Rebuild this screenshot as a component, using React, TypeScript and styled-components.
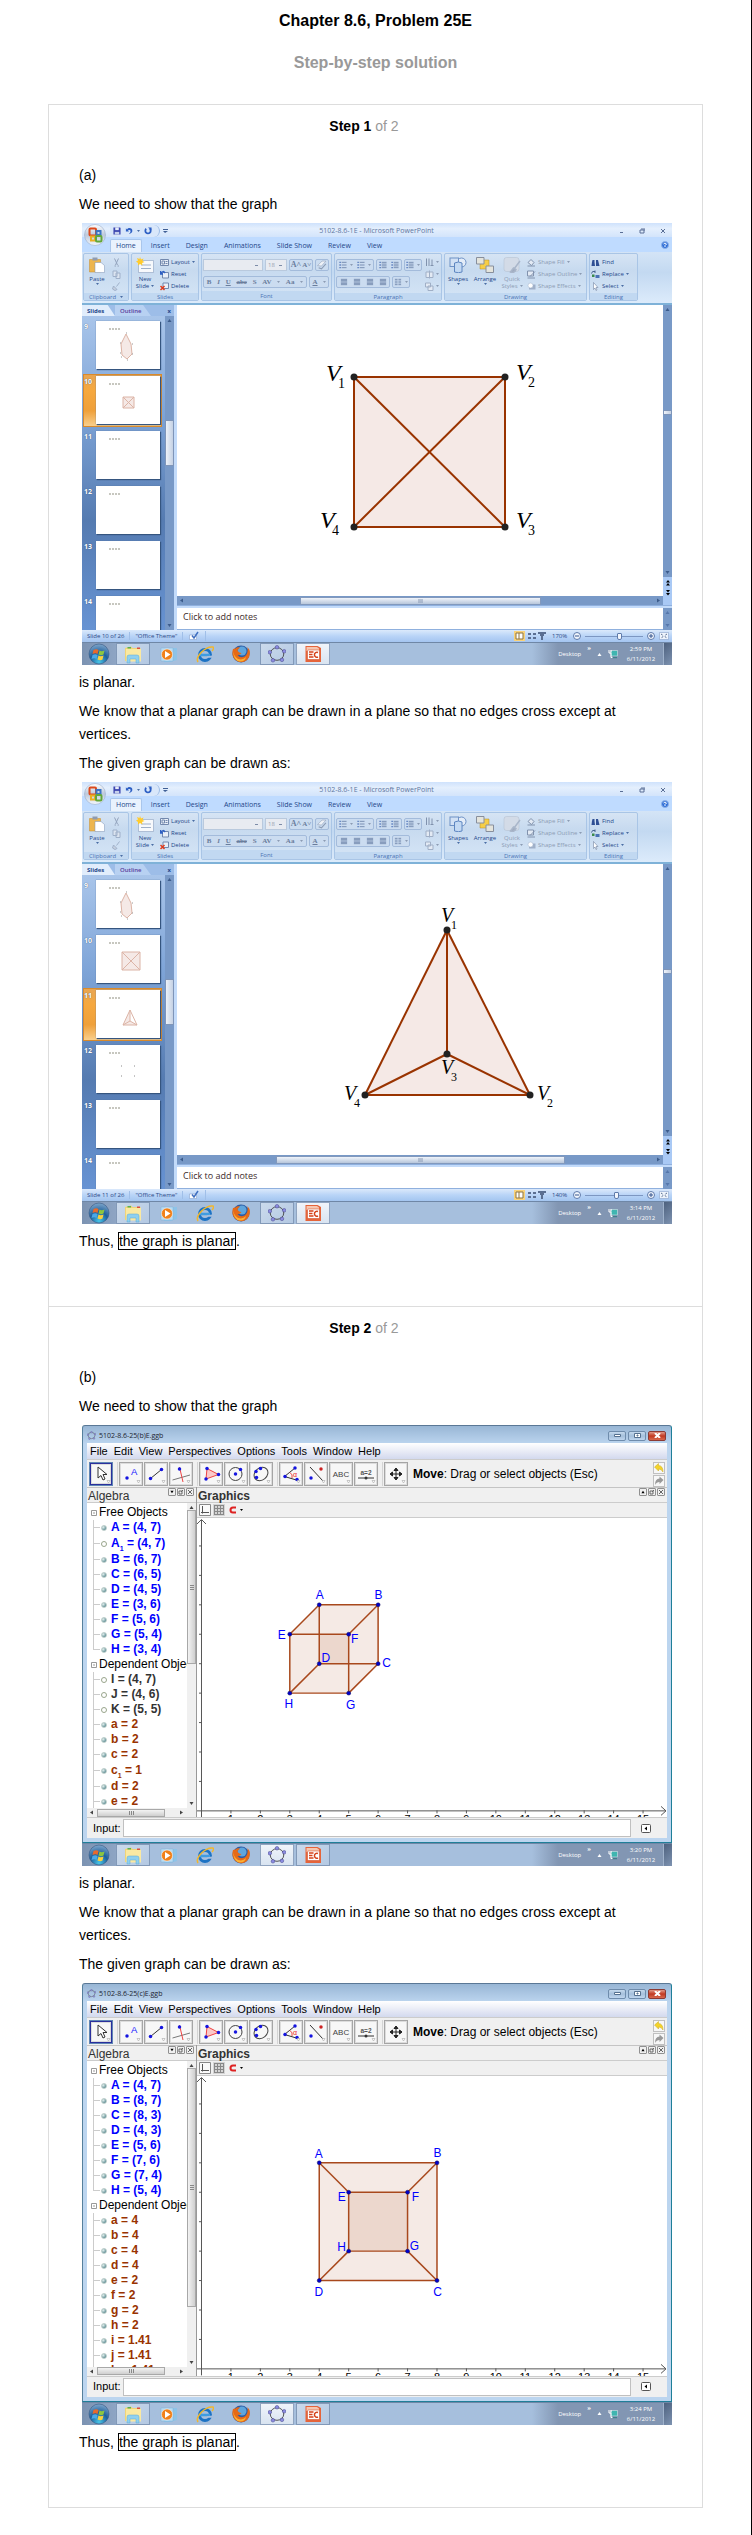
import React from "react";
import styled, { createGlobalStyle, css } from "styled-components";

const GlobalStyle = createGlobalStyle`
  * { box-sizing: border-box; }
  body {
    margin: 0;
    background: #fff;
    color: #000;
    font-family: "Liberation Sans", Arial, sans-serif;
    font-size: 14px;
  }
  h1, h2, h3, p, ul, ol, figure { margin: 0; padding: 0; }
  ul, ol { list-style: none; }
  button, input, select { font: inherit; color: inherit; margin: 0; padding: 0; border: 0; background: none; border-radius: 0; }
  svg { display: block; flex: none; }
`;

/* ---------- page ---------- */

const Page = styled.main`
  min-height: 100vh;
  padding: 12px 48px 26px;
  border-right: 1px solid #000;
`;
const Title = styled.h1`
  font-size: 16px;
  line-height: 18px;
  text-align: center;
`;
const Subtitle = styled.h2`
  margin: 24px 0 32px;
  font-size: 16px;
  line-height: 18px;
  text-align: center;
  color: #999;
`;
const Card = styled.div`
  border: 1px solid #ddd;
  border-top: 0;
`;
const Step = styled.section`
  border-top: 1px solid #ddd;
  padding: 12px 30px 53px;
`;
const StepHeading = styled.h3`
  margin-bottom: 29px;
  padding-right: 23px;
  font-size: 14px;
  line-height: 18px;
  text-align: center;
  span { font-weight: 400; color: #999; }
`;
const Prose = styled.div`
  display: flex;
  flex-direction: column;
  gap: 6px;
  line-height: 23px;
`;
const Text = styled.p`
  padding-right: 24px;
`;
const Answer = styled.span`
  border: 1px solid #000;
`;
const Shot = styled.figure`
  margin: 1px 0 0 3px;
  overflow: hidden;
`;

/* ---------- shared ---------- */

const Icon = styled.svg<{ $w: number; $h?: number }>`
  width: ${(p) => p.$w}px;
  height: ${(p) => p.$h ?? p.$w}px;
`;
const PlainButton = styled.button`
  display: flex;
  align-items: center;
  justify-content: center;
`;
const Caret = ({ color = "#4b6ea5" }: { color?: string }) => (
  <Icon $w={3} $h={2} viewBox="0 0 6 4"><path d="M0 0h6L3 4z" fill={color} /></Icon>
);
type Dir = "up" | "down" | "left" | "right";
const turn: Record<Dir, number> = { up: 0, right: 90, down: 180, left: 270 };
const Arrow = ({ dir, color = "#3c5c8c" }: { dir: Dir; color?: string }) => (
  <Icon $w={5} viewBox="0 0 10 10"><path d="M1 8h8L5 2z" fill={color} transform={`rotate(${turn[dir]} 5 5)`} /></Icon>
);

/* ---------- taskbar ---------- */

const Bar = styled.div`
  display: flex;
  height: 23px;
  background: #a6bfdd;
  border-top: 1px solid #6f87a6;
  font: 6px/10px "Open Sans", sans-serif;
  color: #fff;
`;
const StartArea = styled.div`
  display: flex;
  width: 34px;
  background: linear-gradient(90deg, #7c93b2, #8ea5c4);
`;
const TaskButton = styled(PlainButton)<{ $state?: "open" | "active" }>`
  width: 34px;
  margin-right: 2px;
  border: 1px solid transparent;
  ${(p) => p.$state === "open" && css`
    border-color: #8299b8;
    background: linear-gradient(135deg, #cbdaec, #b3c8e2);
  `}
  ${(p) => p.$state === "active" && css`
    border-color: #90a4c0;
    background: linear-gradient(180deg, #f0f4fa, #d9e4f1);
  `}
`;
const Tray = styled.div`
  display: flex;
  align-items: center;
  gap: 6px;
  margin-left: auto;
  padding: 0 5px 0 26px;
  background: linear-gradient(90deg, #a6bfdd, #8296b3 26px);
`;
const Chevrons = styled.span`align-self: flex-start; line-height: 11px; font-weight: 700;`;
const Clock = styled.time`width: 34px; text-align: center;`;
const ShowDesktop = styled.button`
  width: 9px;
  border-left: 1px solid #9fb2cb;
  background: linear-gradient(135deg, #4d617e, #7e93b1);
`;

const WindowsOrb = () => (
  <Icon $w={22} viewBox="0 0 44 44">
    <defs><radialGradient id="orb" cx=".5" cy=".9" r=".9"><stop offset="0" stopColor="#49c6e8" /><stop offset=".5" stopColor="#1d5f9b" /><stop offset="1" stopColor="#7fa6cb" /></radialGradient></defs>
    <circle cx="22" cy="22" r="20" fill="url(#orb)" stroke="#2b4d78" />
    <path d="M11 14c4-2 7-2 10 0l-2 8c-3-2-6-2-10 0z" fill="#e8692c" />
    <path d="M23 15c3 2 6 2 10 0l-2 8c-3 2-6 2-10 0z" fill="#8cc63f" />
    <path d="M9 24c4-2 7-2 10 0l-2 8c-3-2-6-2-10 0z" fill="#4aa8e8" />
    <path d="M21 25c3 2 6 2 10 0l-2 8c-3 2-6 2-10 0z" fill="#fbd13c" />
  </Icon>
);
const FolderIcon = () => (
  <Icon $w={20} viewBox="0 0 40 40">
    <path d="M4 8l12-3 3 3h16v26H4z" fill="#f0d477" /><path d="M6 10h30v25H6z" fill="#fae9a2" />
    <path d="M9 6h7v3H9z" fill="#58b158" /><path d="M28 7h6v3h-6z" fill="#d95040" />
    <path d="M8 38V26q0-4 4-4h16q4 0 4 4v12h-6v-8H14v8z" fill="#8fd0ef" stroke="#5aa9d4" />
  </Icon>
);
const PlayerIcon = () => (
  <Icon $w={18} viewBox="0 0 36 36">
    <path d="M12 6h22v24l-14 4H8z" fill="#8ec3e8" /><path d="M2 6h24v26H2z" fill="#b9dbf2" stroke="#7eb0d6" />
    <circle cx="14" cy="19" r="11" fill="#f08019" stroke="#fff" /><path d="M10 12l11 7-11 7z" fill="#fff" />
  </Icon>
);
const IeIcon = () => (
  <Icon $w={18} viewBox="0 0 36 36">
    <circle cx="18" cy="20" r="11" fill="none" stroke="#1d73c4" strokeWidth="6" />
    <path d="M8 20h20" stroke="#3f9ce0" strokeWidth="5" /><path d="M22 24h14v-2z" stroke="#a6bfdd" strokeWidth="3" />
    <path d="M4 34C-2 24 18 2 34 4c2 2 0 6-2 8" fill="none" stroke="#f2b72c" strokeWidth="3" />
  </Icon>
);
const FirefoxIcon = () => (
  <Icon $w={20} viewBox="0 0 40 40">
    <circle cx="20" cy="20" r="17" fill="#2c5ca5" /><circle cx="22" cy="14" r="9" fill="#5fa5dc" />
    <path d="M4 10q-4 14 5 22 12 9 23 0 8-8 5-20l-4-6q2 14-6 19-9 4-14-3 5 1 8-4-7-1-8-6l5-5q-6-2-9 2z" fill="#e66a17" />
    <path d="M4 10q0 14 10 20 10 3 16-4-2 9-12 9Q4 34 4 10z" fill="#fbb034" />
  </Icon>
);
const PentagonIcon = ({ size, node = "#8b8be0" }: { size: number; node?: string }) => {
  const pts = [[20, 5], [36, 14], [31, 33], [11, 34], [4, 16]];
  return (
    <Icon $w={size} viewBox="0 0 40 40">
      <ellipse cx="20" cy="20" rx="15" ry="14" fill="none" stroke="#444" strokeWidth="2" />
      {pts.map(([x, y]) => <circle key={x} cx={x} cy={y} r="4" fill={node} stroke="#3a3a80" />)}
    </Icon>
  );
};
const PptIcon = () => (
  <Icon $w={18} viewBox="0 0 36 36">
    <path d="M3 2h24l7 4v28H3z" fill="#e5643a" /><path d="M5 4h21l4 3v5H5z" fill="#f7c6b0" />
    <rect x="7" y="10" width="24" height="19" rx="2" fill="#fff" stroke="#c9401b" />
    <path d="M10 14h9M10 19h7M10 24h9" stroke="#d5421a" strokeWidth="3" />
    <path d="M28 15a5 5 0 1 0 0 9" fill="none" stroke="#d5421a" strokeWidth="3" />
  </Icon>
);
const NetIcon = () => (
  <Icon $w={10} viewBox="0 0 20 20">
    <rect x="6" y="3" width="13" height="11" fill="#3fb5b0" stroke="#e8f0f4" /><path d="M2 2v6M6 2v5M2 8h4v9h5" fill="none" stroke="#fff" strokeWidth="2" />
    <path d="M9 17h9" stroke="#3f7f8c" strokeWidth="3" />
  </Icon>
);

const Taskbar = ({ active, time }: { active: "ppt" | "ggb"; time: string }) => (
  <Bar>
    <StartArea><PlainButton aria-label="Start"><svg width="6" height="1" /><WindowsOrb /></PlainButton></StartArea>
    <TaskButton $state="open" aria-label="Explorer"><FolderIcon /></TaskButton>
    <TaskButton aria-label="Media Player"><PlayerIcon /></TaskButton>
    <TaskButton aria-label="Internet Explorer"><IeIcon /></TaskButton>
    <TaskButton aria-label="Firefox"><FirefoxIcon /></TaskButton>
    <TaskButton $state={active === "ggb" ? "active" : "open"} aria-label="GeoGebra"><PentagonIcon size={18} /></TaskButton>
    <TaskButton $state={active === "ppt" ? "active" : "open"} aria-label="PowerPoint"><PptIcon /></TaskButton>
    <Tray>
      <span>Desktop</span><Chevrons>»</Chevrons><Arrow dir="up" color="#fff" /><NetIcon />
      <Clock>{time}<br />6/11/2012</Clock>
    </Tray>
    <ShowDesktop aria-label="Show desktop" />
  </Bar>
);

/* ---------- PowerPoint window ---------- */

const Ppt = styled.div`
  position: relative;
  font: 6px/8px "Open Sans", sans-serif;
  color: #24478a;
`;
const OfficeButton = styled.button`
  position: absolute;
  left: 2px;
  top: 1px;
`;
const PptTitle = styled.div`
  display: flex;
  align-items: center;
  height: 14px;
  padding: 2px 6px 0 28px;
  background: linear-gradient(180deg, #cfe2fc, #e4effd 40%, #d3e4fb);
  color: #6076a0;
  font-size: 7px;
`;
const QuickAccess = styled.div`
  display: flex;
  align-items: center;
  gap: 4px;
  width: 50px;
  height: 12px;
  padding-left: 3px;
  border-right: 1px solid #9dbce6;
  border-radius: 0 6px 6px 0;
  background: #d9e7fa;
`;
const PptName = styled.span`flex: 1; text-align: center; padding-right: 34px;`;
const WindowButtons = styled.div`display: flex; align-items: center; gap: 15px;`;
const Tabs = styled.div`
  display: flex;
  align-items: flex-end;
  height: 15px;
  padding: 0 3px 0 28px;
  background: #bfdbff;
  font-size: 7px;
`;
const Tab = styled(PlainButton)<{ $on?: boolean }>`
  height: 13px;
  padding: 0 ${(p) => (p.$on ? 5 : 8)}px;
  border-radius: 2px 2px 0 0;
  ${(p) => p.$on && css`background: #e9f2fd; border: 1px solid #a9c6ec; border-bottom: 0; margin-right: 1px;`}
`;
const Help = styled(PlainButton)`margin: 0 0 3px auto;`;
const Ribbon = styled.div`
  display: flex;
  gap: 2px;
  height: 53px;
  padding: 1px 1px 2px;
  border-bottom: 2px solid #7fb2d8;
  background: linear-gradient(180deg, #d4e4f6, #c3d9f1 40%, #dcebfb);
`;
const Group = styled.section<{ $w: number }>`
  display: flex;
  flex-direction: column;
  width: ${(p) => p.$w}px;
  border: 1px solid #a9c5e6;
  border-radius: 2px;
  background: linear-gradient(180deg, #d6e4f4, #c7daef 35%, #d5e5f6);
  overflow: hidden;
`;
const GroupBody = styled.div`
  display: flex;
  flex: 1;
  gap: 3px;
  padding: 2px 1px 0;
`;
const GroupLabel = styled.div`
  display: flex;
  justify-content: center;
  align-items: center;
  gap: 4px;
  height: 9px;
  background: #c1d8f1;
  color: #4b74b5;
`;
const BigButton = styled.button<{ $dim?: boolean }>`
  display: flex;
  flex-direction: column;
  align-items: center;
  width: 24px;
  line-height: 7px;
  color: ${(p) => (p.$dim ? "#8c9cb4" : "inherit")};
  svg:first-child { margin: 1px 0 3px; }
`;
const Inline = styled.span`display: flex; align-items: center; gap: 2px;`;
const SmallStack = styled.div`
  display: flex;
  flex-direction: column;
  justify-content: space-around;
  align-items: flex-start;
  padding-bottom: 1px;
`;
const SmallButton = styled.button<{ $dim?: boolean }>`
  display: flex;
  align-items: center;
  gap: 2px;
  height: 12px;
  white-space: nowrap;
  color: ${(p) => (p.$dim ? "#8c9cb4" : "inherit")};
`;
const ToolRows = styled.div`
  display: flex;
  flex-direction: column;
  gap: 5px;
  padding-top: 3px;
`;
const ToolRow = styled.div`display: flex; gap: 2px;`;
const ToolSet = styled.div<{ $w: number }>`
  display: flex;
  align-items: center;
  justify-content: space-around;
  width: ${(p) => p.$w}px;
  height: 12px;
  border: 1px solid #a3bbdb;
  border-radius: 2px;
  background: #cbdcf0;
  color: #6a7d9c;
`;
const FontSelect = styled.select<{ $w: number }>`
  appearance: none;
  width: ${(p) => p.$w}px;
  height: 12px;
  padding-left: 2px;
  border: 1px solid #b9c9dd;
  background: #e8ebf1 linear-gradient(45deg, #7d8ca8, #7d8ca8) no-repeat right 4px center / 3px 1px;
  color: #9aa3b2;
`;
const Glyph = styled.button<{ $size?: number }>`
  font: ${(p) => p.$size ?? 7}px/10px "Liberation Serif", serif;
  font-weight: 700;
  &:nth-child(2) { font-style: ${(p) => (p.$size ? "normal" : "italic")}; }
`;

const small = (d: React.ReactNode, w = 9) => <Icon $w={w} viewBox="0 0 18 18">{d}</Icon>;
const OfficeLogo = () => (
  <Icon $w={22} viewBox="0 0 44 44">
    <defs><linearGradient id="ob" x2="0" y2="1"><stop stopColor="#fff" /><stop offset=".5" stopColor="#bcc9dc" /><stop offset="1" stopColor="#f4f8fd" /></linearGradient></defs>
    <circle cx="22" cy="22" r="21" fill="url(#ob)" stroke="#8ea3c2" />
    <g fill="none" strokeWidth="4"><rect x="11" y="9" width="13" height="14" rx="2" stroke="#dd4a1c" /><rect x="25" y="14" width="8" height="8" stroke="#3a74c4" /><rect x="14" y="25" width="8" height="8" stroke="#e9b022" /><rect x="24" y="24" width="11" height="11" rx="2" stroke="#62a73b" /></g>
  </Icon>
);
const Save = () => small(<><path d="M1 1h15l1 1v15H1z" fill="#3d47b0" /><path d="M5 1h8v6H5z" fill="#e7ecfa" /><path d="M4 11h10v6H4z" fill="#c6d0ec" /></>, 8);
const Undo = () => small(<path d="M2 3v7h7L6.500 7.500q6-2 6 2t-4 6q8-1 8-7t-7-6q-3 0-5 3z" fill="#2d5fc4" />, 8);
const Redo = () => small(<><path d="M5 4a6 6 0 1 0 8 0" fill="none" stroke="#2d5fc4" strokeWidth="4" /><path d="M9 1h8v7z" fill="#2d5fc4" /></>, 8);
const Lines = ({ n = 4, list = false }) => small(
  <>{Array.from({ length: n }, (_, i) => <path key={i} d={`M${list ? 6 : 2} ${3 + (i * 12) / (n - 1)}h${list ? 11 : 14}`} stroke="#7187ab" strokeWidth="2" />)}
    {list && [3, 9, 15].map((y) => <path key={y} d={`M1 ${y}h3`} stroke="#4f74b8" strokeWidth="3" />)}</>, 8);

const PptRibbon = () => (
  <Ribbon>
    <Group $w={46}>
      <GroupBody>
        <BigButton>
          <Icon $w={16} viewBox="0 0 32 32"><path d="M1 5h22v25H1z" fill="#edb54d" stroke="#c58d2e" /><path d="M7 1h10v6H7z" fill="#8f9bb0" /><path d="M12 11h12l7 6v14H12z" fill="#fff" stroke="#7d92b5" /></Icon>
          Paste<Caret />
        </BigButton>
        <SmallStack>
          <SmallButton aria-label="Cut">{small(<path d="M5 1l6 13M13 1L7 14M5 16h3M11 16h3" stroke="#93a3bd" strokeWidth="2" />)}</SmallButton>
          <SmallButton aria-label="Copy">{small(<path d="M2 2h8v11H2zM8 6h8v11H8z" fill="#dbe4f0" stroke="#9fb0c9" strokeWidth="2" />)}</SmallButton>
          <SmallButton aria-label="Format painter">{small(<path d="M15 1L9 9M3 8l7 7-4 2-5-3z" fill="#c6d0df" stroke="#9fb0c9" strokeWidth="2" />)}</SmallButton>
        </SmallStack>
      </GroupBody>
      <GroupLabel>Clipboard <Caret /></GroupLabel>
    </Group>
    <Group $w={68}>
      <GroupBody>
        <BigButton>
          <Icon $w={18} $h={16} viewBox="0 0 36 32"><path d="M5 7h30v24H5z" fill="#f7f9fc" stroke="#7d92b5" /><path d="M10 16h20M10 23h20" stroke="#9fb0c9" strokeWidth="2" /><path d="M8 0l2 5 5-2-2 5 4 2-5 2 1 5-5-3-4 3V12L0 9l4-2-2-5 5 2z" fill="#ffcb2e" /></Icon>
          New<Inline>Slide<Caret /></Inline>
        </BigButton>
        <SmallStack>
          <SmallButton>{small(<path d="M1 3h16v12H1zM4 6h5v6H4zM11 7h4M11 11h4" fill="#e9eff8" stroke="#7288ad" strokeWidth="2" />)}Layout <Caret /></SmallButton>
          <SmallButton>{small(<><path d="M5 5h12v11H5z" fill="#e9eff8" stroke="#7288ad" strokeWidth="2" /><path d="M1 2v6h5M2 7q4-7 8-1" fill="none" stroke="#2d5fc4" strokeWidth="3" /></>)}Reset</SmallButton>
          <SmallButton>{small(<><path d="M6 2h11v11H6z" fill="#e9eff8" stroke="#7288ad" strokeWidth="2" /><path d="M1 8l8 8M9 8l-8 8" stroke="#e03a1a" strokeWidth="3" /></>)}Delete</SmallButton>
        </SmallStack>
      </GroupBody>
      <GroupLabel>Slides</GroupLabel>
    </Group>
    <Group $w={131}>
      <GroupBody>
        <ToolRows>
          <ToolRow>
            <Inline><FontSelect $w={60} aria-label="Font"><option></option></FontSelect></Inline>
            <FontSelect $w={22} aria-label="Font size" defaultValue="18"><option>18</option></FontSelect>
            <ToolSet $w={24}><Glyph $size={8}>A˄</Glyph><Glyph $size={7}>A˅</Glyph></ToolSet>
            <ToolSet $w={14}>{small(<><path d="M1 10l8-8h7l-8 9z" fill="#eef2f8" stroke="#8c9cb4" /><path d="M3 14l5 2 8-9" fill="none" stroke="#8c9cb4" strokeWidth="2" /></>, 10)}</ToolSet>
          </ToolRow>
          <ToolRow>
            <ToolSet $w={104}>
              <Glyph>B</Glyph><Glyph>I</Glyph><Glyph><u>U</u></Glyph><Glyph><s>abc</s></Glyph><Glyph>S</Glyph><Glyph>AV</Glyph><Caret color="#8c9cb4" /><Glyph>Aa</Glyph><Caret color="#8c9cb4" />
            </ToolSet>
            <ToolSet $w={20}><Glyph><u>A</u></Glyph><Caret color="#8c9cb4" /></ToolSet>
          </ToolRow>
        </ToolRows>
      </GroupBody>
      <GroupLabel>Font</GroupLabel>
    </Group>
    <Group $w={108}>
      <GroupBody>
        <ToolRows>
          <ToolRow>
            <ToolSet $w={38}><Lines n={3} list /><Caret color="#8c9cb4" /><Lines n={3} list /><Caret color="#8c9cb4" /></ToolSet>
            <ToolSet $w={26}><Lines list /><Lines list /></ToolSet>
            <ToolSet $w={18}><Lines list /><Caret color="#8c9cb4" /></ToolSet>
          </ToolRow>
          <ToolRow>
            <ToolSet $w={54}><Lines n={5} /><Lines n={5} /><Lines n={5} /><Lines n={5} /></ToolSet>
            <ToolSet $w={18}>{small(<path d="M2 3h6M2 7h6M2 11h6M2 15h6M10 3h6M10 7h6M10 11h6M10 15h6" stroke="#7187ab" strokeWidth="2" />, 8)}<Caret color="#8c9cb4" /></ToolSet>
          </ToolRow>
        </ToolRows>
        <SmallStack>
          <SmallButton $dim aria-label="Text direction">{small(<path d="M3 1v15M8 1v15M14 3v13M11 15h6" stroke="#8192ad" strokeWidth="2" />)}<Caret color="#8c9cb4" /></SmallButton>
          <SmallButton $dim aria-label="Align text">{small(<path d="M2 4h14v11H2zM9 1v16" fill="#e3eaf4" stroke="#a0afc6" strokeWidth="2" />)}<Caret color="#8c9cb4" /></SmallButton>
          <SmallButton $dim aria-label="SmartArt">{small(<path d="M1 2h10v8H1zM6 8h10v9H6z" fill="#e3eaf4" stroke="#a0afc6" strokeWidth="2" />)}<Caret color="#8c9cb4" /></SmallButton>
        </SmallStack>
      </GroupBody>
      <GroupLabel>Paragraph</GroupLabel>
    </Group>
    <Group $w={143}>
      <GroupBody>
        <BigButton>
          <Icon $w={18} $h={16} viewBox="0 0 36 32"><circle cx="25" cy="11" r="9" fill="#e3ecf8" stroke="#6d91c6" strokeWidth="2" /><rect x="2" y="2" width="17" height="17" fill="#d2e1f5" stroke="#6d91c6" strokeWidth="2" /><path d="M11 12q8-4 15 0v18q-7 3-15 0z" fill="#c3d9f3" stroke="#5e86c0" strokeWidth="2" /></Icon>
          Shapes<Caret />
        </BigButton>
        <BigButton>
          <Icon $w={18} $h={16} viewBox="0 0 36 32"><path d="M8 6h18v18H8z" fill="#f6ce46" stroke="#b08a2a" /><path d="M1 1h15v13H1zM20 18h15v13H20z" fill="#e4e4dc" stroke="#888f9c" strokeWidth="2" /></Icon>
          Arrange<Caret />
        </BigButton>
        <BigButton $dim>
          <Icon $w={18} $h={16} viewBox="0 0 36 32"><rect x="2" y="1" width="30" height="28" rx="5" fill="#d3dbe7" stroke="#b0bccd" /><path d="M34 8L22 24M15 30q8 3 11-5l-5-3z" fill="#9fabbf" stroke="#a9b6ca" strokeWidth="3" /></Icon>
          Quick<Inline>Styles<Caret color="#8c9cb4" /></Inline>
        </BigButton>
        <SmallStack>
          <SmallButton $dim>{small(<path d="M2 9l6-6 6 6-5 6zM1 16h15" fill="#e3eaf4" stroke="#8192ad" strokeWidth="2" />)}Shape Fill <Caret color="#8c9cb4" /></SmallButton>
          <SmallButton $dim>{small(<path d="M1 2h12v10H1zM16 3L6 13M1 16h15" fill="#e3eaf4" stroke="#8192ad" strokeWidth="2" />)}Shape Outline <Caret color="#8c9cb4" /></SmallButton>
          <SmallButton $dim>{small(<><path d="M4 5h13v10H4z" fill="#9fb0c9" /><circle cx="7" cy="7" r="5" fill="#fff" stroke="#9fb0c9" /></>)}Shape Effects <Caret color="#8c9cb4" /></SmallButton>
        </SmallStack>
      </GroupBody>
      <GroupLabel>Drawing</GroupLabel>
    </Group>
    <Group $w={49}>
      <GroupBody>
        <SmallStack>
          <SmallButton>{small(<path d="M3 4h4v4l1 8H1l1-8zM10 4h4l1 4 2 8h-7z" fill="#2f4f94" />)}Find</SmallButton>
          <SmallButton>{small(<><path d="M1 7q1-6 7-4M8 1v5" fill="none" stroke="#46618f" strokeWidth="2" /><path d="M2 9h5v5H2z" fill="#3b8a4c" /><path d="M9 10h8v6H9z" fill="#4a72b5" /></>)}Replace <Caret /></SmallButton>
          <SmallButton>{small(<path d="M5 1v14l3-3 2 5 2-1-2-5h4z" fill="#fff" stroke="#5f7091" />)}Select <Caret /></SmallButton>
        </SmallStack>
      </GroupBody>
      <GroupLabel>Editing</GroupLabel>
    </Group>
  </Ribbon>
);

const PptBody = styled.div`display: flex; background: #c3dbfa;`;
const SidePane = styled.div`
  display: flex;
  flex-direction: column;
  width: 92px;
  margin-right: 3px;
`;
const SideTabs = styled.div`
  display: flex;
  align-items: center;
  height: 11px;
  padding-right: 3px;
  background: #9dbde8;
`;
const SideTab = styled.button<{ $on?: boolean }>`
  height: 11px;
  width: ${(p) => (p.$on ? 33 : 36)}px;
  clip-path: polygon(0 0, 78% 0, 100% 100%, 0 100%);
  background: ${(p) => (p.$on ? "#e1edfc" : "#b8d1f2")};
  font-weight: ${(p) => (p.$on ? 700 : 600)};
  color: ${(p) => (p.$on ? "#24478a" : "#5a3a9a")};
  text-align: left;
  padding-left: 5px;
`;
const SideClose = styled.button`margin-left: auto; font-weight: 700;`;
const SideScroll = styled.div`
  display: flex;
  flex: 1;
  contain: size;
  overflow: hidden;
`;
const SlideList = styled.ol`
  display: flex;
  flex-direction: column;
  gap: 2px;
  flex: 1;
  padding: 3px 3px 0 2px;
  background: linear-gradient(180deg, #a9c5ea 0, #7fa5d8 30%, #557bb1 65%, #6793d3);
`;
const SlideItem = styled.li<{ $on?: boolean }>`
  display: flex;
  flex: none;
  height: 53px;
  padding-top: 2px;
  color: #fff;
  font-size: 7px;
  font-weight: 700;
  ${(p) => p.$on && css`
    background: linear-gradient(180deg, #e8a552, #f6a83e 30%, #efa03a 70%, #f9cf8c);
    border: 1px solid #d98a2b;
    padding-top: 1px;
    margin-left: -1px;
  `}
`;
const SlideNo = styled.span`width: 12px; padding-top: 2px; text-shadow: 0 0 1px #2a4068;`;
const Thumb = styled.button`
  width: 64px;
  height: 48px;
  background: #fff;
  box-shadow: 1px 1px 1px #35557f, 0 0 1px #56749c;
`;
const VScroll = styled.div<{ $w: number }>`
  display: flex;
  flex-direction: column;
  align-items: center;
  width: ${(p) => p.$w}px;
  background: #7899c7;
  padding: 2px 0;
`;
const ScrollThumb = styled.div<{ $h: number; $top: number }>`
  width: 100%;
  height: ${(p) => p.$h}px;
  margin: ${(p) => p.$top}px 0 auto;
  border: 1px solid #7f95b8;
  border-radius: 1px;
  background: linear-gradient(90deg, #edf2f9, #c4d1e4);
`;
const Editor = styled.div`flex: 1; min-width: 0;`;
const EditorRow = styled.div`display: flex;`;
const SlideCanvas = styled.svg`
  flex: 1;
  min-width: 0;
  width: 100%;
  background: #fff;
  font-family: "Liberation Serif", "Times New Roman", serif;
`;
const HScroll = styled.div`
  display: flex;
  align-items: center;
  flex: 1;
  height: 9px;
  padding: 0 2px;
  background: #7899c7;
`;
const HThumb = styled.div<{ $left: number; $w: number }>`
  display: flex;
  align-items: center;
  justify-content: center;
  width: ${(p) => p.$w}%;
  height: 8px;
  margin: 0 auto 0 ${(p) => p.$left}%;
  border: 1px solid #8299bd;
  background: linear-gradient(180deg, #f0f4fa, #b7c6db);
`;
const Splitter = styled.div`height: 3px; background: #c3dbfa; border-top: 1px solid #8fb0de;`;
const Notes = styled.p`
  flex: 1;
  height: 22px;
  padding: 0 6px;
  background: #fff;
  border-bottom: 1px solid #8fb0de;
  font-size: 9px;
  line-height: 18px;
  color: #3c2a2a;
`;
const PageJump = styled.div`width: 9px; background: #a9c9f5;`;
const RightRail = styled.div`display: flex; flex-direction: column; width: 9px;`;
const RailGap = styled.div`
  display: flex;
  flex-direction: column;
  align-items: center;
  gap: 4px;
  height: 19px;
  padding-top: 3px;
  background: #a9c9f5;
`;
const RailScroll = styled(VScroll)`flex: 1;`;
const Status = styled.div`
  display: flex;
  align-items: center;
  height: 12px;
  padding: 0 3px 0 5px;
  background: linear-gradient(180deg, #dbe9fb, #b9d4f7 50%, #a4c5f0);
  color: #2d4a86;
`;
const StatusCell = styled.span`
  padding-right: 5px;
  margin-right: 5px;
  border-right: 1px solid #a0bfe8;
  white-space: nowrap;
`;
const ZoomArea = styled.div`
  display: flex;
  align-items: center;
  gap: 4px;
  margin-left: auto;
`;
const ZoomLabel = styled.label`width: 17px; margin-left: 2px;`;
const Slider = styled.input`
  appearance: none;
  width: 58px;
  height: 8px;
  background: linear-gradient(#7d97c2, #7d97c2) no-repeat center / 100% 1px;
  &::-webkit-slider-thumb {
    appearance: none;
    width: 5px;
    height: 7px;
    border: 1px solid #5f7bab;
    border-radius: 1px 1px 2px 2px;
    background: #f2f6fc;
  }
`;
const Sign = ({ plus }: { plus?: boolean }) => (
  <Icon $w={8} viewBox="0 0 16 16"><circle cx="8" cy="8" r="7" fill="#f2f6fc" stroke="#5f7bab" strokeWidth="2" /><path d={plus ? "M4 8h8M8 4v8" : "M4 8h8"} stroke="#35558f" strokeWidth="2" /></Icon>
);

type ThumbArt = "blob" | "smallSquare" | "square" | "triangle" | "dots" | "none";
const art: Record<ThumbArt, React.ReactNode> = {
  none: null,
  blob: <><path d="M30 13l5 10 1 10-5 5-5-4-1-11z" /><path d="M30 12h1M36 23h1M36 33h1M31 39h1M25 36h1M24 32h1M24 22h1" stroke="#999" /></>,
  smallSquare: <path d="M27 21h11v11H27zl11 11M38 21L27 32" />,
  square: <path d="M26 17h18v18H26zl18 18M44 17L26 35" />,
  triangle: <path d="M34 20l7 15H27zv11l7 4M34 31l-7 4" />,
  dots: <path d="M25 21h1M38 21h1M25 31h1M38 31h1" stroke="#888" />,
};

type Pt = [number, number];
interface VLabel { n: number; x: number; y: number }
interface PptProps {
  slide: string; zoom: string; time: string; thumbs: ThumbArt[]; selected: number; hLeft: number; hWidth: number;
  outline: Pt[]; edges: [Pt, Pt][]; nodes: Pt[]; labels: VLabel[]; size: number;
}
const Powerpoint = (p: PptProps) => (
  <Shot>
    <Ppt>
      <PptTitle>
        <QuickAccess><Save /><Undo /><Caret /><Redo /></QuickAccess>
        <svg width="8" height="4" viewBox="0 0 8 4"><path d="M3 0h5v1H3zM3 2h5L5 4z" fill="#3f5f96" /></svg>
        <PptName>5102-8.6-1E - Microsoft PowerPoint</PptName>
        <WindowButtons>
          <button aria-label="Minimize"><svg width="5" height="6"><path d="M1 4h3v1H1z" fill="#5a6f96" /></svg></button>
          <button aria-label="Restore"><svg width="6" height="6"><path d="M1 2h4v3H1zM2 1h4v2" fill="none" stroke="#5a6f96" /></svg></button>
          <button aria-label="Close"><svg width="6" height="6"><path d="M1 1l4 4M5 1L1 5" stroke="#5a6f96" /></svg></button>
        </WindowButtons>
      </PptTitle>
      <Tabs>
        <Tab $on>Home</Tab><Tab>Insert</Tab><Tab>Design</Tab><Tab>Animations</Tab><Tab>Slide Show</Tab><Tab>Review</Tab><Tab>View</Tab>
        <Help aria-label="Help"><Icon $w={8} viewBox="0 0 16 16"><circle cx="8" cy="8" r="7" fill="#2f6fd8" stroke="#8fb2e8" strokeWidth="2" /><path d="M5 6q3-4 6 0l-3 3v3" fill="none" stroke="#fff" strokeWidth="2" /></Icon></Help>
      </Tabs>
      <PptRibbon />
      <OfficeButton aria-label="Office"><OfficeLogo /></OfficeButton>
      <PptBody>
        <SidePane>
          <SideTabs><SideTab $on>Slides</SideTab><SideTab>Outline</SideTab><SideClose aria-label="Close pane">x</SideClose></SideTabs>
          <SideScroll>
            <SlideList>
              {p.thumbs.map((t, i) => (
                <SlideItem key={i} $on={i === p.selected}>
                  <SlideNo>{i + 9}</SlideNo>
                  <Thumb aria-label={`Slide ${i + 9}`}>
                    <Icon $w={64} $h={48} viewBox="0 0 64 48">
                      <path d="M13 8h11" stroke="#8f8f80" strokeDasharray="2 1" />
                      <g fill={t === "dots" ? "none" : "#f5e9e6"} stroke="#dcb4a6">{art[t]}</g>
                    </Icon>
                  </Thumb>
                </SlideItem>
              ))}
            </SlideList>
            <VScroll $w={9}><Arrow dir="up" /><ScrollThumb $h={46} $top={97} /><Arrow dir="down" /></VScroll>
          </SideScroll>
        </SidePane>
        <Editor>
          <EditorRow>
            <SlideCanvas viewBox="95 82 486 291">
              <polygon points={p.outline.join(" ")} fill="#f5e9e6" />
              <g stroke="#993300" strokeWidth="2">{p.edges.map(([a, b], i) => <line key={i} x1={a[0]} y1={a[1]} x2={b[0]} y2={b[1]} />)}</g>
              {p.nodes.map(([x, y]) => <circle key={`${x},${y}`} cx={x} cy={y} r="3.500" fill="#222" />)}
              {p.labels.map((l) => (
                <g key={l.n}>
                  <text x={l.x} y={l.y} fontSize={p.size} fontStyle="italic">V</text>
                  <text x={l.x + p.size / 2} y={l.y + 7} fontSize={p.size === 24 ? 14 : 12}>{l.n}</text>
                </g>
              ))}
            </SlideCanvas>
            <RightRail>
              <RailScroll $w={9}><Arrow dir="up" /><ScrollThumb $h={5} $top={98} /><Arrow dir="down" /></RailScroll>
              <RailGap>
                <svg width="4" height="6" viewBox="0 0 8 12"><path d="M0 5l4-5 4 5zM0 11l4-5 4 5z" fill="#000" /></svg>
                <svg width="4" height="6" viewBox="0 0 8 12"><path d="M0 0l4 5 4-5zM0 6l4 5 4-5z" fill="#000" /></svg>
              </RailGap>
            </RightRail>
          </EditorRow>
          <EditorRow>
            <HScroll><Arrow dir="left" /><HThumb $left={p.hLeft} $w={p.hWidth}><svg width="5" height="4"><path d="M0 1h5M0 3h5" stroke="#8a9ab5" /></svg></HThumb><Arrow dir="right" /></HScroll>
            <PageJump />
          </EditorRow>
          <Splitter />
          <EditorRow>
            <Notes>Click to add notes</Notes>
            <VScroll $w={9}><Arrow dir="up" color="#5677ab" /><svg width="1" height="8" /><Arrow dir="down" color="#5677ab" /></VScroll>
          </EditorRow>
        </Editor>
      </PptBody>
      <Status>
        <StatusCell>Slide {p.slide} of 26</StatusCell>
        <StatusCell>"Office Theme"</StatusCell>
        <StatusCell><svg width="12" height="10" viewBox="0 0 24 20"><path d="M3 8h14v9H3z" fill="#fff" stroke="#7d97c2" /><path d="M8 9l4 5 8-12" fill="none" stroke="#3f6fc0" strokeWidth="3" /></svg></StatusCell>
        <ZoomArea>
          <svg width="32" height="10">
            <path d="M0 0h11v10H0z" fill="#f9d27a" /><path d="M2 2h7v6H2zM5 2v6" fill="#fff" stroke="#8d7440" />
            <path d="M14 2h3v2h-3zM19 2h3v2h-3zM14 6h3v2h-3zM19 6h3v2h-3z" fill="#5b6f92" /><path d="M24 2h8M26 4h4M28 5v4" stroke="#5b6f92" strokeWidth="2" />
          </svg>
          <ZoomLabel htmlFor={`zoom-${p.slide}`}>{p.zoom}</ZoomLabel>
          <Sign />
          <Slider id={`zoom-${p.slide}`} type="range" min={0} max={100} defaultValue={p.zoom === "170%" ? 60 : 55} />
          <Sign plus />
          <svg width="10" height="8" viewBox="0 0 20 16"><path d="M1 1h18v14H1z" fill="#eef4fc" stroke="#7d97c2" /><path d="M4 4l12 8M16 4L4 12" stroke="#5b6f92" strokeWidth="2" strokeDasharray="4 5" /></svg>
        </ZoomArea>
      </Status>
      <Taskbar active="ppt" time={p.time} />
    </Ppt>
  </Shot>
);

/* ---------- GeoGebra window ---------- */

const Frame = styled.div`
  padding: 0 4px 4px;
  border: 1px solid #1f7f99;
  border-left-color: #56809c;
  border-top-color: #5a7896;
  border-radius: 3px 3px 0 0;
  background: linear-gradient(180deg, #98b6d5 0, #bcd5ef 18px);
`;
const GgbTitle = styled.div`
  display: flex;
  align-items: center;
  height: 17px;
  padding-top: 2px;
  font: 7px/8px "Open Sans", sans-serif;
  color: #1c2430;
`;
const GgbName = styled.span`flex: 1; padding-left: 3px;`;
const FrameButton = styled(PlainButton)<{ $close?: boolean }>`
  width: 18px;
  height: 10px;
  margin: 0 1px;
  border: 1px solid ${(p) => (p.$close ? "#8c3a34" : "#6f8cac")};
  border-radius: 2px;
  background: ${(p) => (p.$close ? "linear-gradient(180deg,#e09a8a,#c23a22 50%,#d8694e)" : "linear-gradient(180deg,#c4d8ec,#a5c0dc 50%,#bfd6ee)")};
`;
const Menu = styled.nav`
  display: flex;
  align-items: center;
  gap: 6px;
  height: 16px;
  padding-left: 3px;
  background: linear-gradient(180deg, #fff, #eef0f8 40%, #d3d9ee);
  font-size: 11px;
`;
const Tools = styled.div`
  display: flex;
  align-items: center;
  height: 28px;
  padding: 1px 2px 0 1px;
  background: #f0f0f0;
  border-top: 1px solid #ccc;
  font-size: 12px;
`;
const ToolGroup = styled.div`
  display: flex;
  gap: 1px;
  margin-right: 4px;
  padding-left: 1px;
  & + & { border-left: 1px solid #d4d4d4; }
`;
const Tool = styled(PlainButton)<{ $on?: boolean }>`
  width: 24px;
  height: 24px;
  border: ${(p) => (p.$on ? "2px solid #2a2f9c" : "1px solid #a5a5a5")};
  outline: ${(p) => (p.$on ? "1px solid #5f86b5" : "none")};
  outline-offset: -1px;
  box-shadow: inset 0 0 0 1px #dcdcdc;
  background: #f7f7f7;
`;
const ToolHint = styled.p`flex: 1; padding-left: 1px;`;
const History = styled.div`display: flex; flex-direction: column; gap: 1px;`;
const HistoryButton = styled(PlainButton)`width: 12px; height: 12px; border: 1px solid #c0c0c0; background: #f7f7f7;`;
const Panes = styled.div`display: flex; background: #f0f0f0;`;
const AlgebraPane = styled.section`
  display: flex;
  flex-direction: column;
  width: 110px;
  border-right: 1px solid #999;
`;
const GraphicsPane = styled.section`flex: 1; min-width: 0;`;
const PaneHeader = styled.header<{ $bold?: boolean }>`
  display: flex;
  justify-content: space-between;
  height: 16px;
  padding: 0 2px 0 1px;
  border-top: 1px solid #c4c4c4;
  border-bottom: 1px solid #ccc;
  font-size: 12px;
  line-height: 16px;
  font-weight: ${(p) => (p.$bold ? 700 : 400)};
  color: #333;
`;
const PaneButtons = styled.div`display: flex; gap: 1px;`;
const PaneButton = styled(PlainButton)`
  width: 8px;
  height: 8px;
  border: 1px solid #909090;
  border-radius: 1px;
`;
const TreeArea = styled.div`
  display: flex;
  flex: 1;
  contain: size;
  overflow: hidden;
  background: #fff;
`;
const Tree = styled.ul`
  flex: 1;
  min-width: 0;
  padding: 2px 0 0 4px;
  overflow: hidden;
  font-size: 12px;
  line-height: 15px;
  white-space: nowrap;
`;
const TreeHead = styled.li`display: flex; align-items: center; gap: 2px; height: 15px;`;
const TreeItem = styled.li<{ $color: string; $tall: boolean; $last: boolean }>`
  display: flex;
  align-items: center;
  height: ${(p) => (p.$tall ? 17 : 15)}px;
  padding-left: 2px;
  font-weight: 700;
  color: ${(p) => p.$color};
  background: linear-gradient(#ccc, #ccc) no-repeat 2px 0 / 1px ${(p) => (p.$last ? "50%" : "100%")},
    linear-gradient(#ccc, #ccc) no-repeat 2px 50% / 7px 1px;
  sub { font-size: 7px; line-height: 0; vertical-align: -4px; }
`;
const Dot = styled.span<{ $hollow: boolean }>`
  flex: none;
  width: 6px;
  height: 6px;
  margin: 0 4px 0 8px;
  border: 1px solid ${(p) => (p.$hollow ? "#99a58c" : "#b9cbc8")};
  border-radius: 50%;
  background: ${(p) => (p.$hollow ? "#fff" : "radial-gradient(circle at 30% 30%, #e8f4f2, #356f78)")};
`;
const GrayScroll = styled.div`
  display: flex;
  flex-direction: column;
  align-items: center;
  width: 9px;
  padding: 2px 0;
  background: #f0f0f0;
`;
const GrayThumb = styled.div<{ $h: number }>`
  display: flex;
  align-items: center;
  justify-content: center;
  width: 100%;
  height: ${(p) => p.$h}px;
  margin-bottom: auto;
  border: 1px solid #a8a8a8;
  background: linear-gradient(90deg, #f3f3f3, #cfcfcf);
`;
const GrayHScroll = styled.div`
  display: flex;
  align-items: center;
  height: 9px;
  padding: 0 12px 0 2px;
  gap: 3px;
  background: #f0f0f0;
`;
const GrayHThumb = styled.div`
  display: flex;
  justify-content: center;
  align-items: center;
  width: 68px;
  height: 8px;
  margin-right: auto;
  border: 1px solid #a8a8a8;
  background: linear-gradient(180deg, #f3f3f3, #cfcfcf);
`;
const ViewTools = styled.div`
  display: flex;
  align-items: center;
  gap: 2px;
  height: 15px;
  padding-left: 2px;
  border-bottom: 1px solid #ccc;
`;
const Plot = styled.svg`
  width: 100%;
  background: #fff;
  font: 12px "Liberation Sans", Arial, sans-serif;
`;
const InputBar = styled.div`
  display: flex;
  align-items: center;
  height: 21px;
  padding: 0 16px 0 6px;
  background: #f0f0f0;
  border-top: 1px solid #ccc;
  font-size: 11px;
`;
const CommandInput = styled.input`
  flex: 1;
  height: 18px;
  margin: 0 10px 0 2px;
  border: 1px solid #c0c0c0;
  background: #fff;
`;

const blue = "#1414e0";
const node = (x: number, y: number, c = blue) => <circle key={`${x}-${y}`} cx={x} cy={y} r="3.500" fill={c} />;
const toolGroups: React.ReactNode[][] = [
  [<path key="0" d="M14 6v22l6-5 4 9 4-2-4-9h8z" fill="#fff" stroke="#333" strokeWidth="2" />],
  [
    <g key="1">{node(12, 28)}<text x="20" y="22" fontSize="19" fill="#1414ff" fontFamily="Liberation Sans">A</text></g>,
    <g key="2"><path d="M9 29L31 11" stroke="#333" strokeWidth="2" />{node(9, 29)}{node(31, 11)}</g>,
    <g key="3"><path d="M3 32L38 22" stroke="#777" strokeWidth="2" /><path d="M17 6l7 30" stroke="#e44" strokeWidth="2" />{node(17, 10)}</g>,
  ],
  [
    <g key="4"><path d="M12 9l23 12-25 9z" fill="#fbc9c9" stroke="#e44" strokeWidth="2" />{node(12, 9)}{node(35, 21)}{node(10, 30)}</g>,
    <g key="5"><circle cx="19" cy="20" r="13" fill="none" stroke="#444" strokeWidth="2" />{node(19, 20)}{node(29, 11)}</g>,
    <g key="6"><ellipse cx="20" cy="20" rx="15" ry="12" fill="none" stroke="#444" strokeWidth="2" transform="rotate(-40 20 20)" />{node(10, 15)}{node(19, 9)}{node(11, 27)}</g>,
  ],
  [
    <g key="7"><path d="M28 8L7 25l27 8" fill="none" stroke="#333" strokeWidth="2" /><path d="M18 17q6 4 4 11" fill="none" stroke="#e44" strokeWidth="2" /><text x="24" y="25" fontSize="14" fill="#e22">α</text>{node(28, 8)}{node(8, 25)}{node(32, 31)}</g>,
    <g key="8"><path d="M8 6l26 28" stroke="#333" strokeWidth="2" />{node(30, 10, "#c22")}{node(10, 28)}</g>,
    <text key="9" x="20" y="25" fontSize="16" textAnchor="middle" fill="#444">ABC</text>,
    <g key="10"><path d="M4 28h32" stroke="#333" strokeWidth="2" /><circle cx="20" cy="28" r="3" fill="#333" /><text x="20" y="22" fontSize="13" fontWeight="700" textAnchor="middle" fill="#555">a=2</text></g>,
  ],
  [<path key="11" d="M20 9v22M9 20h22M16 13l4-5 4 5zM16 27l4 5 4-5zM13 16l-5 4 5 4zM27 16l5 4-5 4z" fill="#222" stroke="#222" strokeWidth="2" />],
];

interface GeoProps {
  file: string; time: string; free: string[]; dependent: string[]; thumb: number; id: string;
  light: Pt[]; dark: Pt[]; edges: string[]; points: Record<string, Pt>; labels: Record<string, Pt>;
}
const X = (n: number) => 119.5 + 29.5 * n;
const Y = (n: number) => 386.5 - 29.5 * n;
const poly = (pts: Pt[]) => pts.map(([x, y]) => `${X(x)},${Y(y)}`).join(" ");

const Entry = ({ text, last }: { text: string; last: boolean }) => {
  const [name, value] = text.split("=");
  const [base, sub] = name.split("_");
  const aux = /^[IJK]/.test(base);
  const color = aux ? "#333" : /^[A-H]/.test(base) ? "#0000ff" : "#993300";
  return (
    <TreeItem $color={color} $tall={!!sub} $last={last}>
      <Dot $hollow={aux || name === "A_1"} /><span>{base}{sub && <sub>{sub}</sub>} = {value}</span>
    </TreeItem>
  );
};
const Expander = () => <svg width="6" height="6"><path d="M.5 .5h5v5h-5zM2 3h2" fill="none" stroke="#999" /></svg>;
const PaneControls = ({ dir }: { dir: Dir }) => (
  <PaneButtons>
    <PaneButton aria-label="View"><Icon $w={4} viewBox="0 0 10 10"><path d="M1 8h8L5 2z" transform={`rotate(${turn[dir]} 5 5)`} /></Icon></PaneButton>
    <PaneButton aria-label="Detach"><svg width="6" height="6"><path d="M1 2h3v3H1zM3 3l2-2" fill="none" stroke="#666" /></svg></PaneButton>
    <PaneButton aria-label="Close view"><svg width="6" height="6"><path d="M1 1l4 4M5 1L1 5" stroke="#666" /></svg></PaneButton>
  </PaneButtons>
);

const Geogebra = (g: GeoProps) => (
  <Shot>
    <Frame>
      <GgbTitle>
        <PentagonIcon size={9} node="#9a9ad8" />
        <GgbName>{g.file}</GgbName>
        <FrameButton aria-label="Minimize"><svg width="7" height="3"><path d="M.5 .5h6v2h-6z" fill="#fff" stroke="#55708f" /></svg></FrameButton>
        <FrameButton aria-label="Maximize"><svg width="7" height="5"><path d="M.5 .5h6v4h-6zM3 2h1v1H3z" fill="#fff" stroke="#55708f" /></svg></FrameButton>
        <FrameButton $close aria-label="Close"><svg width="7" height="5"><path d="M1 0l5 5M6 0L1 5" stroke="#fff" strokeWidth="2" /></svg></FrameButton>
      </GgbTitle>
      <Menu>{["File", "Edit", "View", "Perspectives", "Options", "Tools", "Window", "Help"].map((m) => <button key={m}>{m}</button>)}</Menu>
      <Tools>
        {toolGroups.map((group, i) => (
          <ToolGroup key={i}>
            {group.map((drawing, j) => (
              <Tool key={j} $on={i === 0} aria-label={`Tool ${i + 1}.${j + 1}`}>
                <Icon $w={20} viewBox="0 0 40 40">{drawing}<path d="M32 33h6l-3 5z" fill="#fff" stroke="#999" /></Icon>
              </Tool>
            ))}
          </ToolGroup>
        ))}
        <ToolHint><b>Move</b>: Drag or select objects (Esc)</ToolHint>
        <History>
          <HistoryButton aria-label="Undo"><Icon $w={10} viewBox="0 0 20 20"><path d="M1 8l8-7v4q9 0 9 13-3-6-9-6v4z" fill="#f4d32a" stroke="#c9a91c" /></Icon></HistoryButton>
          <HistoryButton aria-label="Redo"><Icon $w={10} viewBox="0 0 20 20"><path d="M19 8l-8-7v4q-9 0-9 13 3-6 9-6v4z" fill="#999" /></Icon></HistoryButton>
        </History>
      </Tools>
      <Panes>
        <AlgebraPane>
          <PaneHeader>Algebra<PaneControls dir="down" /></PaneHeader>
          <TreeArea>
            <Tree>
              <TreeHead><Expander />Free Objects</TreeHead>
              {g.free.map((t, i) => <Entry key={t} text={t} last={i === g.free.length - 1} />)}
              <TreeHead><Expander />Dependent Objects</TreeHead>
              {g.dependent.map((t) => <Entry key={t} text={t} last={false} />)}
            </Tree>
            <GrayScroll>
              <Arrow dir="up" color="#444" />
              <GrayThumb $h={g.thumb}><svg width="4" height="5"><path d="M0 .5h4M0 2.500h4M0 4.500h4" stroke="#888" /></svg></GrayThumb>
              <Arrow dir="down" color="#444" />
            </GrayScroll>
          </TreeArea>
          <GrayHScroll><Arrow dir="left" color="#444" /><GrayHThumb><svg width="5" height="4"><path d="M.5 0v4M2.500 0v4M4.500 0v4" stroke="#888" /></svg></GrayHThumb><Arrow dir="right" color="#444" /></GrayHScroll>
        </AlgebraPane>
        <GraphicsPane>
          <PaneHeader $bold>Graphics<PaneControls dir="up" /></PaneHeader>
          <ViewTools>
            <button aria-label="Axes"><svg width="12" height="12"><path d="M.5 .5h11v11H.5z" fill="#fafafa" stroke="#888" /><path d="M3.500 2v7.500M2 8.500h8" fill="none" stroke="#555" /></svg></button>
            <button aria-label="Grid"><svg width="12" height="12"><path d="M0 0h12v12H0z" fill="#d4d4d4" /><path d="M1.500 1v10M4.500 1v10M7.500 1v10M10.500 1v10M1 1.500h10M1 4.500h10M1 7.500h10M1 10.500h10" stroke="#888" /></svg></button>
            <button aria-label="Point capturing"><svg width="11" height="12"><path d="M9 3.500H6a2.500 2.500 0 0 0 0 5h3" fill="none" stroke="#d22" strokeWidth="2" /></svg></button>
            <Caret color="#000" />
          </ViewTools>
          <Plot viewBox="115 93 471 300">
            <polygon points={poly(g.light)} fill="#993300" fillOpacity=".1" />
            <polygon points={poly(g.dark)} fill="#993300" fillOpacity=".1" />
            <g fill="none" stroke="#555">
              <path d="M119.500 393V95M115 99l4.500-4.500L124 99M115 386.500h470M580 382l5 4.500-5 4.500" />
              {Array.from({ length: 9 }, (_, i) => <path key={i} d={`M117 ${Y(i + 1)}h3`} />)}
              {Array.from({ length: 15 }, (_, i) => <path key={i} d={`M${X(i + 1)} 386v3`} />)}
            </g>
            {Array.from({ length: 15 }, (_, i) => <text key={i} x={X(i + 1)} y="399" textAnchor="middle" fontSize="11">{i + 1}</text>)}
            {g.edges.map((e) => {
              const [a, b] = [g.points[e[0]], g.points[e[1]]];
              return <line key={e} x1={X(a[0])} y1={Y(a[1])} x2={X(b[0])} y2={Y(b[1])} stroke="#a8481c" strokeWidth="1.500" />;
            })}
            {Object.entries(g.points).map(([n, [x, y]]) => <circle key={n} cx={X(x)} cy={Y(y)} r="2" fill="#0000cc" stroke="#111155" strokeWidth=".5" />)}
            {Object.entries(g.labels).map(([n, [x, y]]) => <text key={n} x={x} y={y + 4} textAnchor="middle" fill="#0000ff">{n}</text>)}
          </Plot>
        </GraphicsPane>
      </Panes>
      <InputBar>
        <label htmlFor={g.id}>Input:</label>
        <CommandInput id={g.id} />
        <button aria-label="Input help"><svg width="10" height="9"><rect x=".5" y=".5" width="9" height="8" rx="1" fill="#fff" stroke="#555" /><path d="M6 2.500v4L3.500 4.500z" /></svg></button>
      </InputBar>
    </Frame>
    <Taskbar active="ggb" time={g.time} />
  </Shot>
);

/* ---------- content ---------- */

const a1: Pt = [272, 154], a2: Pt = [423, 154], a3: Pt = [423, 304], a4: Pt = [272, 304];
const b1: Pt = [365, 148], b2: Pt = [448, 313], b3: Pt = [365, 272], b4: Pt = [283, 313];

const Explanation = () => (
  <>
    <Text>is planar.</Text>
    <Text>We know that a planar graph can be drawn in a plane so that no edges cross except at vertices.</Text>
    <Text>The given graph can be drawn as:</Text>
  </>
);
const Conclusion = () => <Text>Thus, <Answer>the graph is planar</Answer>.</Text>;

export default function App() {
  return (
    <Page>
      <GlobalStyle />
      <Title>Chapter 8.6, Problem 25E</Title>
      <Subtitle>Step-by-step solution</Subtitle>
      <Card>
        <Step>
          <StepHeading>Step 1 <span>of 2</span></StepHeading>
          <Prose>
            <Text>(a)</Text>
            <Text>We need to show that the graph</Text>
            <Powerpoint
              slide="10" zoom="170%" time="2:59 PM" selected={1} hLeft={24} hWidth={50} size={24}
              thumbs={["blob", "smallSquare", "none", "none", "none", "none"]}
              outline={[a1, a2, a3, a4]} nodes={[a1, a2, a3, a4]}
              edges={[[a1, a2], [a2, a3], [a3, a4], [a4, a1], [a1, a3], [a2, a4]]}
              labels={[{ n: 1, x: 244, y: 158 }, { n: 2, x: 434, y: 157 }, { n: 3, x: 434, y: 305 }, { n: 4, x: 238, y: 305 }]}
            />
            <Explanation />
            <Powerpoint
              slide="11" zoom="140%" time="3:14 PM" selected={2} hLeft={19} hWidth={60} size={20}
              thumbs={["blob", "square", "triangle", "dots", "none", "none"]}
              outline={[b1, b2, b4]} nodes={[b1, b2, b3, b4]}
              edges={[[b1, b2], [b2, b4], [b4, b1], [b1, b3], [b3, b2], [b3, b4]]}
              labels={[{ n: 1, x: 359, y: 140 }, { n: 2, x: 455, y: 318 }, { n: 3, x: 359, y: 292 }, { n: 4, x: 262, y: 318 }]}
            />
            <Conclusion />
          </Prose>
        </Step>
        <Step>
          <StepHeading>Step 2 <span>of 2</span></StepHeading>
          <Prose>
            <Text>(b)</Text>
            <Text>We need to show that the graph</Text>
            <Geogebra
              id="cube-input" file="5102-8.6-25(b)E.ggb" time="3:20 PM" thumb={154}
              free={["A=(4, 7)", "A_1=(4, 7)", "B=(6, 7)", "C=(6, 5)", "D=(4, 5)", "E=(3, 6)", "F=(5, 6)", "G=(5, 4)", "H=(3, 4)"]}
              dependent={["I=(4, 7)", "J=(4, 6)", "K=(5, 5)", "a=2", "b=2", "c=2", "c_1=1", "d=2", "e=2"]}
              light={[[4, 7], [6, 7], [6, 5], [5, 4], [3, 4], [3, 6]]}
              dark={[[4, 6], [5, 6], [5, 5], [4, 5]]}
              edges={["AB", "BC", "CD", "DA", "EF", "FG", "GH", "HE", "AE", "BF", "CG", "DH"]}
              points={{ A: [4, 7], B: [6, 7], C: [6, 5], D: [4, 5], E: [3, 6], F: [5, 6], G: [5, 4], H: [3, 4] }}
              labels={{ A: [238, 170], B: [297, 170], C: [305, 238], D: [244, 233], E: [200, 210], F: [273, 214], G: [269, 280], H: [207, 279] }}
            />
            <Explanation />
            <Geogebra
              id="flat-input" file="5102-8.6-25(c)E.ggb" time="3:24 PM" thumb={239}
              free={["A=(4, 7)", "B=(8, 7)", "C=(8, 3)", "D=(4, 3)", "E=(5, 6)", "F=(7, 6)", "G=(7, 4)", "H=(5, 4)"]}
              dependent={["a=4", "b=4", "c=4", "d=4", "e=2", "f=2", "g=2", "h=2", "i=1.41", "j=1.41", "k=1.41"]}
              light={[[4, 7], [8, 7], [8, 3], [4, 3]]}
              dark={[[5, 6], [7, 6], [7, 4], [5, 4]]}
              edges={["AB", "BC", "CD", "DA", "EF", "FG", "GH", "HE", "AE", "BF", "CG", "DH"]}
              points={{ A: [4, 7], B: [8, 7], C: [8, 3], D: [4, 3], E: [5, 6], F: [7, 6], G: [7, 4], H: [5, 4] }}
              labels={{ A: [237, 171], B: [356, 170], C: [356, 309], D: [237, 309], E: [260, 214], F: [334, 214], G: [333, 263], H: [260, 264] }}
            />
            <Conclusion />
          </Prose>
        </Step>
      </Card>
    </Page>
  );
}
